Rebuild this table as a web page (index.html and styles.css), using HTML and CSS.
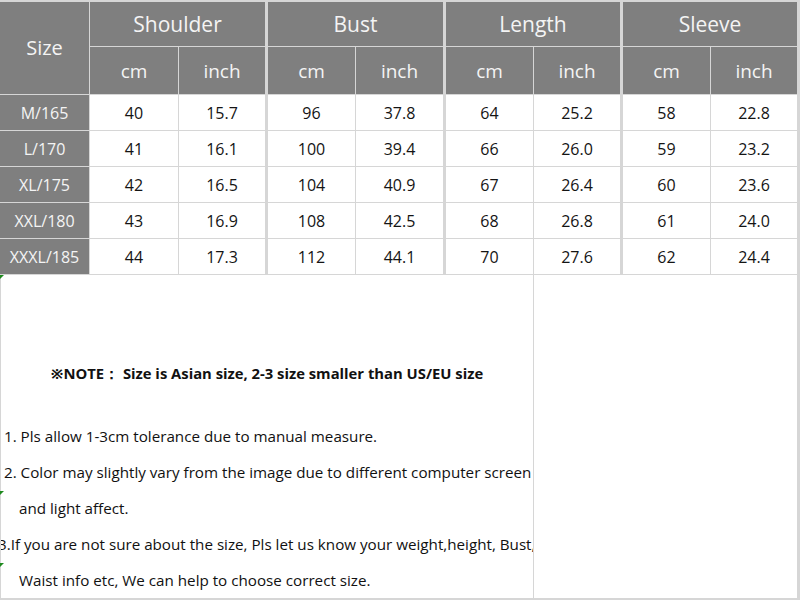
FILE: index.html
```html
<!DOCTYPE html>
<html>
<head>
<meta charset="utf-8">
<link rel="stylesheet" href="styles.css">
</head>
<body>
<div class="sheet">
  <div class="grid">
    <div class="hd size">Size</div>
    <div class="hd grp">Shoulder</div>
    <div class="hd grp gs">Bust</div>
    <div class="hd grp gs">Length</div>
    <div class="hd grp gs">Sleeve</div>
    <div class="hd sub">cm</div><div class="hd sub">inch</div>
    <div class="hd sub gs">cm</div><div class="hd sub">inch</div>
    <div class="hd sub gs">cm</div><div class="hd sub">inch</div>
    <div class="hd sub gs">cm</div><div class="hd sub">inch</div>

    <div class="lab">M/165</div><div class="c">40</div><div class="c">15.7</div><div class="c gs">96</div><div class="c">37.8</div><div class="c gs">64</div><div class="c">25.2</div><div class="c gs">58</div><div class="c">22.8</div>
    <div class="lab">L/170</div><div class="c">41</div><div class="c">16.1</div><div class="c gs">100</div><div class="c">39.4</div><div class="c gs">66</div><div class="c">26.0</div><div class="c gs">59</div><div class="c">23.2</div>
    <div class="lab">XL/175</div><div class="c">42</div><div class="c">16.5</div><div class="c gs">104</div><div class="c">40.9</div><div class="c gs">67</div><div class="c">26.4</div><div class="c gs">60</div><div class="c">23.6</div>
    <div class="lab">XXL/180</div><div class="c">43</div><div class="c">16.9</div><div class="c gs">108</div><div class="c">42.5</div><div class="c gs">68</div><div class="c">26.8</div><div class="c gs">61</div><div class="c">24.0</div>
    <div class="lab">XXXL/185</div><div class="c">44</div><div class="c">17.3</div><div class="c gs">112</div><div class="c">44.1</div><div class="c gs">70</div><div class="c">27.6</div><div class="c gs">62</div><div class="c">24.4</div>
  </div>
  <div class="lower">
    <div class="notes">
      <p class="note">※NOTE：&nbsp;Size is Asian size, 2-3 size smaller than US/EU size</p>
      <p class="ln">1. Pls allow 1-3cm tolerance due to manual measure.</p>
      <p class="ln">2. Color may slightly vary from the image due to different computer screen</p>
      <p class="ln ind">and light affect.</p>
      <p class="ln neg">3.If you are not sure about the size, Pls let us know your weight,height, Bust,</p>
      <p class="ln ind">Waist info etc, We can help to choose correct size.</p>
    </div>
    <div class="side"></div>
  </div>
  <span class="mark m1"></span>
  <span class="mark m2"></span>
  <span class="mark m3"></span>
</div>
</body>
</html>
```
FILE: styles.css
```css
html, body {
  margin: 0;
  padding: 0;
}
body {
  background: #d6d6d6;
  font-family: "Open Sans", "Noto Sans", sans-serif;
}
.sheet {
  position: relative;
  width: 800px;
  height: 600px;
  overflow: hidden;
  background: #d6d6d6;
}
.grid {
  display: grid;
  grid-template-columns: 89px 88px 86px 89px 87px 89px 86px 89px 86px;
  grid-template-rows: 44px 47px repeat(5, 35px);
  column-gap: 1px;
  row-gap: 1px;
  padding: 2px 3px 0 0;
}
.grid > div {
  display: flex;
  align-items: center;
  justify-content: center;
}
.hd {
  background: #7f7f7f;
  color: #f4f4f4;
}
.size {
  grid-row: 1 / span 2;
  font-size: 20px;
  padding-bottom: 2px;
}
.grp {
  grid-column: span 2;
  font-size: 21px;
}
.sub {
  font-size: 19px;
}
.lab {
  background: #7f7f7f;
  color: #f4f4f4;
  font-size: 16px;
}
.c {
  background: #ffffff;
  color: #141414;
  font-size: 16px;
}
.gs {
  border-left: 2px solid #d6d6d6;
}
.lower {
  display: grid;
  grid-template-columns: 532px 263px;
  column-gap: 1px;
  margin: 1px 3px 0 1px;
  height: 323px;
}
.notes {
  background: #ffffff;
  overflow: hidden;
  padding-top: 80px;
}
.side {
  background: #ffffff;
}
.notes p {
  margin: 0;
  white-space: nowrap;
  color: #111111;
}
.note {
  font-weight: bold;
  font-size: 14.8px;
  line-height: 36px;
  text-align: center;
  margin-bottom: 27px !important;
}
.ln {
  font-size: 15.2px;
  line-height: 36px;
  padding-left: 3px;
}
.ind {
  padding-left: 18px !important;
}
.neg {
  text-indent: -6px;
}
.mark {
  position: absolute;
  left: 0;
  width: 0;
  height: 0;
  border-top: 4px solid #1f8a1f;
  border-right: 4px solid transparent;
}
.m1 { top: 275px; }
.m2 { top: 491px; }
.m3 { top: 563px; }
```
